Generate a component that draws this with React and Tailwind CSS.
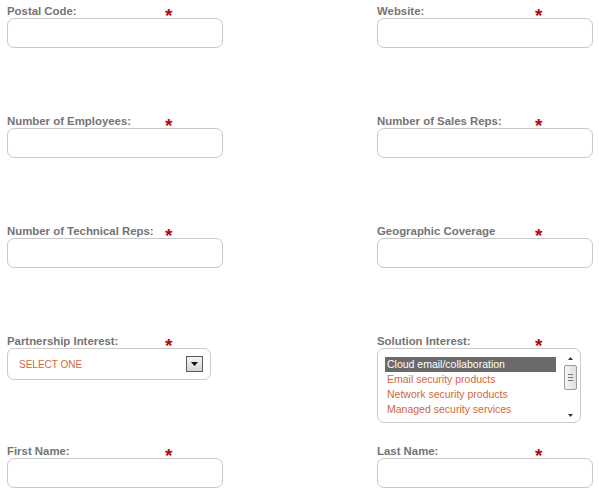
import React from "react";

const font = { fontFamily: '"Liberation Sans", Arial, sans-serif' };

function Label({ text }) {
  return (
    <div className="relative h-[18px]">
      <span className="block pt-[5px] text-[11.4px] leading-[12px] font-bold text-[#747474]">{text}</span>
      <span className="absolute left-[158px] top-[7px] text-[19px] leading-[17px] font-bold text-[#b00a0a]">*</span>
    </div>
  );
}

function TextField({ label }) {
  return (
    <div className="h-[110px]">
      <Label text={label} />
      <div className="w-[216px] h-[30px] border border-[#c9c9c9] rounded-[7px] bg-white" />
    </div>
  );
}

function SelectField({ label }) {
  return (
    <div className="h-[110px]">
      <Label text={label} />
      <div className="w-[204px] h-[32px] border border-[#c9c9c9] rounded-[7px] bg-white flex items-center justify-between pl-[11px] pr-[7px]">
        <span className="text-[10px] text-[#d0683c] pt-[1px]">SELECT ONE</span>
        <div className="w-[17px] h-[16px] border border-[#5a5a5a] bg-gradient-to-b from-[#f4f4f4] to-[#d4d4d4] flex items-center justify-center">
          <svg width="7" height="4" viewBox="0 0 7 4"><path d="M0 0H7L3.5 4Z" fill="#111" /></svg>
        </div>
      </div>
    </div>
  );
}

function ListField({ label }) {
  const items = [
    "Cloud email/collaboration",
    "Email security products",
    "Network security products",
    "Managed security services",
  ];
  return (
    <div className="h-[110px]">
      <Label text={label} />
      <div className="w-[204px] h-[75px] border border-[#c9c9c9] rounded-[7px] bg-white flex pl-[7px] pt-[8px] pr-[2px]">
        <div className="w-[171px] flex flex-col">
          {items.map((t, i) => (
            <div
              key={t}
              className={
                "h-[15px] leading-[15px] pl-[2px] text-[10.5px] " +
                (i === 0 ? "bg-[#6a6a6a] text-white" : "text-[#d0683c]")
              }
            >
              {t}
            </div>
          ))}
        </div>
        <div className="ml-[7px] mt-[-4px] w-[15px] h-[67px] flex flex-col items-center">
          <div className="h-[10px] flex items-center justify-center">
            <svg width="5" height="3" viewBox="0 0 5 3"><path d="M0 3H5L2.5 0Z" fill="#333" /></svg>
          </div>
          <div className="w-[13px] h-[25px] mt-[2px] border border-[#9a9a9a] rounded-[2px] bg-gradient-to-r from-[#f6f6f6] to-[#dedede] flex flex-col items-center justify-center gap-[2px]">
            <div className="w-[5px] h-px bg-[#777]" />
            <div className="w-[5px] h-px bg-[#777]" />
            <div className="w-[5px] h-px bg-[#777]" />
          </div>
          <div className="flex-1" />
          <div className="h-[10px] flex items-center justify-center">
            <svg width="5" height="3" viewBox="0 0 5 3"><path d="M0 0H5L2.5 3Z" fill="#333" /></svg>
          </div>
        </div>
      </div>
    </div>
  );
}

export default function App() {
  return (
    <div className="w-[599px] h-[490px] bg-white overflow-hidden pl-[7px]" style={font}>
      <div className="grid grid-cols-[370px_222px]">
        <TextField label="Postal Code:" />
        <TextField label="Website:" />
        <TextField label="Number of Employees:" />
        <TextField label="Number of Sales Reps:" />
        <TextField label="Number of Technical Reps:" />
        <TextField label="Geographic Coverage" />
        <SelectField label="Partnership Interest:" />
        <ListField label="Solution Interest:" />
        <TextField label="First Name:" />
        <TextField label="Last Name:" />
      </div>
    </div>
  );
}
